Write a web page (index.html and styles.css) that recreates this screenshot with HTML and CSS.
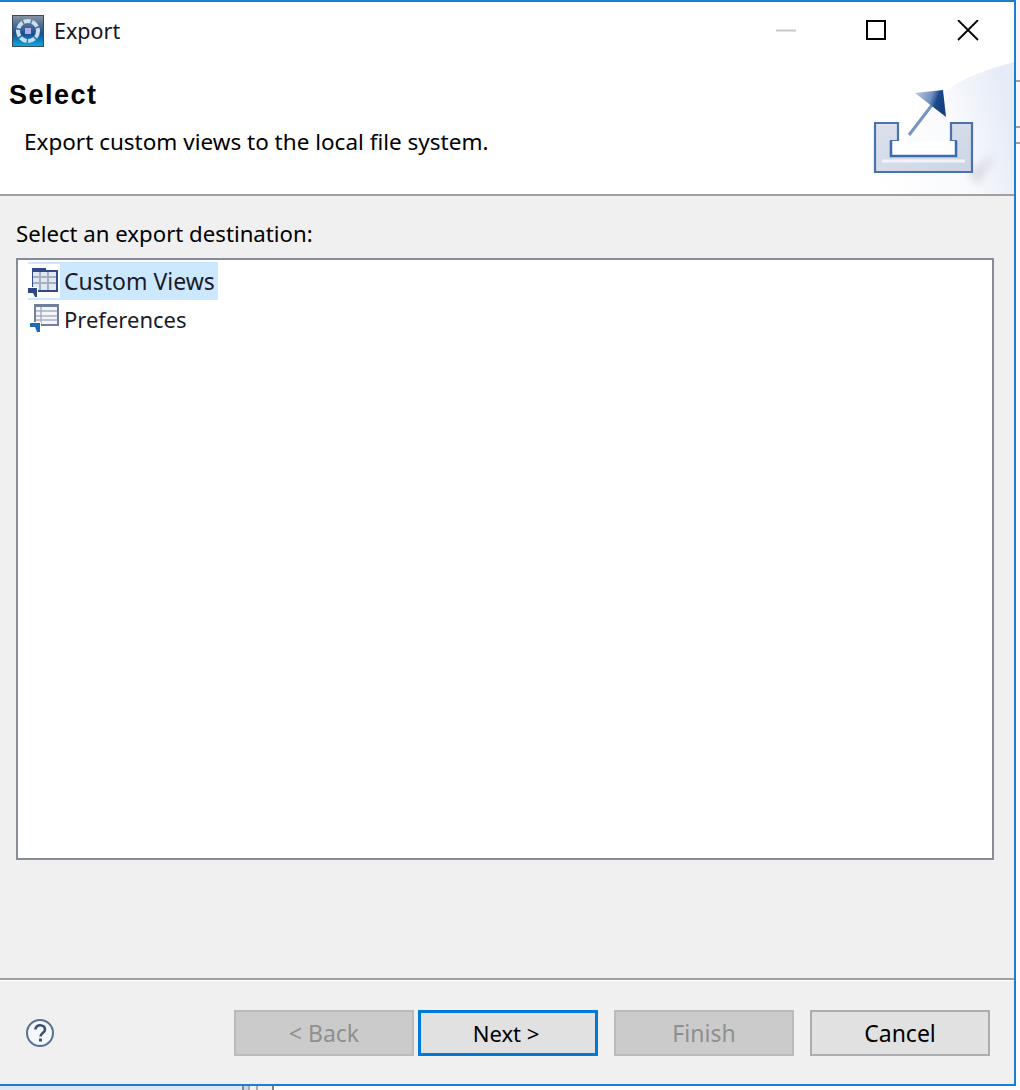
FILE: index.html
```html
<!DOCTYPE html>
<html lang="en">
<head>
    <meta charset="UTF-8">
    <meta name="viewport" content="width=device-width, initial-scale=1.0">
    <title>Export</title>
    <link rel="stylesheet" href="styles.css">
</head>
<body>
    <div class="dialog">
        <div class="banner">
            <svg class="banner-art" width="196" height="134" viewBox="0 0 196 134">
                <defs>
                    <linearGradient id="wash" x1="0" y1="0.7" x2="1" y2="0.5">
                        <stop offset="0" stop-color="#ffffff"/>
                        <stop offset="0.6" stop-color="#f9fafd"/>
                        <stop offset="1" stop-color="#e5ebf7"/>
                    </linearGradient>
                    <linearGradient id="tray" x1="0" y1="0" x2="1" y2="1">
                        <stop offset="0" stop-color="#dde1ec"/>
                        <stop offset="1" stop-color="#ccd5e6"/>
                    </linearGradient>
                    <linearGradient id="arrow" x1="0" y1="0" x2="1" y2="0.3">
                        <stop offset="0" stop-color="#c3d0e4"/>
                        <stop offset="0.55" stop-color="#6f90bf"/>
                        <stop offset="0.75" stop-color="#1d4a8c"/>
                        <stop offset="1" stop-color="#143f80"/>
                    </linearGradient>
                    <filter id="soft"><feGaussianBlur stdDeviation="4"/></filter>
                </defs>
                <path d="M196 2 C160 12 130 22 110 50 C90 80 70 110 50 134 H196 Z" fill="url(#wash)"/>
                <path d="M150 114 L178 92 L160 124 Z" fill="#cfcbd6" opacity="0.7" filter="url(#soft)"/>
                <path d="M57 63 H80 V81 H73 V96 H138 V81 H133 V63 H154 V112 H57 Z" fill="url(#tray)" stroke="#4a73ac" stroke-width="2.2"/>
                <path d="M64 101 H147" stroke="#f1f3f8" stroke-width="3"/>
                <path d="M73 81 V96 H138 V81" fill="#fff" stroke="#3c6cab" stroke-width="2.5"/>
                <path d="M91 75 L114 45" stroke="#7494c2" stroke-width="3"/>
                <path d="M97 33 L125 30 L128 57 Z" fill="url(#arrow)"/>
            </svg>
            <div class="titlebar">
                <svg class="app-icon" width="32" height="32" viewBox="0 0 32 32">
                    <defs>
                        <linearGradient id="appbg" x1="0" y1="0" x2="0" y2="1">
                            <stop offset="0" stop-color="#8d98a4"/>
                            <stop offset="0.3" stop-color="#4d6f95"/>
                            <stop offset="0.6" stop-color="#174f92"/>
                            <stop offset="1" stop-color="#06b4e6"/>
                        </linearGradient>
                    </defs>
                    <rect width="32" height="32" fill="url(#appbg)"/>
                    <rect x="0.5" y="0.5" width="31" height="31" fill="none" stroke="#3b4a57"/>
                    <circle cx="16" cy="16" r="10" fill="none" stroke="#cfdcef" stroke-width="4" stroke-dasharray="7 1.5"/>
                    <rect x="13" y="13" width="6" height="6" fill="#b3acec"/>
                </svg>
                <span class="title-text">Export</span>
                <div class="window-controls">
                    <svg width="22" height="22" viewBox="0 0 22 22"><path d="M1 10.5 H21" stroke="#c8c8c8" stroke-width="2"/></svg>
                    <svg width="22" height="22" viewBox="0 0 22 22"><rect x="1" y="1" width="18" height="18" fill="none" stroke="#000" stroke-width="2"/></svg>
                    <svg width="22" height="22" viewBox="0 0 22 22"><path d="M1 0 L21 20 M21 0 L1 20" stroke="#000" stroke-width="1.8"/></svg>
                </div>
            </div>
            <h1 class="page-title">Select</h1>
            <p class="page-desc">Export custom views to the local file system.</p>
        </div>

        <div class="content">
            <label class="list-label">Select an export destination:</label>
            <div class="tree">
                <div class="tree-item selected">
                    <svg class="tree-icon" width="32" height="34" viewBox="0 0 32 34">
                        <rect width="32" height="34" fill="#fff"/>
                        <path d="M4 4 H18 V6 H30 V28 H4 Z" fill="#2f4a86"/>
                        <rect x="5" y="8" width="23" height="18" fill="#dfe7f3"/>
                        <path d="M5 13 H28 M5 19 H28 M12 8 V26 M20 8 V26" stroke="#a7afbd" stroke-width="2"/>
                        <rect x="0" y="23" width="10" height="11" fill="#fff"/>
                        <path d="M0 24 H9 V33 H7 L5 29 H0 Z" fill="#2c4a80"/>
                    </svg>
                    <span>Custom Views</span>
                </div>
                <div class="tree-item">
                    <svg class="tree-icon" width="32" height="34" viewBox="0 0 32 34">
                        <rect x="6" y="2" width="25" height="22" fill="#6f7f9c"/>
                        <rect x="8" y="5" width="21" height="17" fill="#f3f5f9"/>
                        <path d="M8 9 H29 M8 14 H29 M8 18 H29 M13 5 V22" stroke="#a9b1bf" stroke-width="1.5"/>
                        <rect x="1" y="20" width="12" height="11" fill="#fff"/>
                        <path d="M2 21 H12 V30 H9 L7 25 H2 Z" fill="#1f6bb0"/>
                    </svg>
                    <span class="pref">Preferences</span>
                </div>
            </div>
        </div>

        <div class="footer">
            <svg class="help" width="30" height="30" viewBox="0 0 30 30">
                <circle cx="15" cy="15" r="13" fill="#f4f7fc" stroke="#5c6f96" stroke-width="2"/>
                <path d="M10.5 11.5 C10.5 5.5 20 6 20 11.5 C20 15 15.5 15 15.5 18.5" fill="none" stroke="#3f4f70" stroke-width="2.6"/>
                <rect x="14" y="20.5" width="3" height="3" fill="#3f4f70"/>
            </svg>
            <div class="buttons">
                <button class="btn" disabled>&lt; Back</button>
                <button class="btn default">Next &gt;</button>
                <button class="btn finish" disabled>Finish</button>
                <button class="btn cancel">Cancel</button>
            </div>
        </div>
    </div>
    <div class="behind-bottom"></div>
    <div class="behind-right"></div>
</body>
</html>
```

FILE: styles.css
```css
* {
    box-sizing: border-box;
}
html, body {
    margin: 0;
    padding: 0;
}
body {
    position: relative;
    width: 1020px;
    height: 1090px;
    overflow: hidden;
    background-color: #fdfdfe;
    font-family: "Noto Sans", "Open Sans", sans-serif;
    font-size: 22.5px;
    color: #000;
}
.dialog {
    width: 1016px;
    height: 1086px;
    display: flex;
    flex-direction: column;
    background-color: #f0f0f0;
    border-top: 2px solid #1c7ed2;
    border-right: 2px solid #1c7ed2;
    border-bottom: 2px solid #1c7ed2;
}
/* bits of the window behind the dialog */
.behind-bottom {
    position: absolute;
    left: 0;
    bottom: 0;
    width: 274px;
    height: 4px;
    background: linear-gradient(to right,
        #dce8f5 0 242px, #808890 242px 244px, #c9d8ea 244px 248px,
        #aaaaaa 248px 250px, #f0f0f0 250px 256px, #aaaaaa 256px 258px,
        #f0f0f0 258px 272px, #808080 272px 274px);
}
.behind-right {
    position: absolute;
    right: 0;
    top: 0;
    width: 4px;
    height: 145px;
    background: linear-gradient(to bottom,
        #f7f7f7 0 80px, #a0a0a0 80px 82px, #f7f7f7 82px 126px,
        #a0a0a0 126px 128px, #f7f7f7 128px 142px, #a0a0a0 142px 144px, #fdfdfe 144px);
}
.banner {
    position: relative;
    height: 194px;
    padding: 0 0 0 9px;
    background-color: #fff;
    border-bottom: 2px solid #a0a0a0;
}
.banner-art {
    position: absolute;
    right: 0;
    bottom: 0;
}
.titlebar {
    position: relative;
    display: flex;
    align-items: center;
    height: 58px;
    padding: 0 8px 0 3px;
}
.app-icon {
    margin-right: 10px;
}
.title-text {
    font-size: 21.5px;
    padding-bottom: 2px;
    color: #14141e;
}
.window-controls {
    margin-left: auto;
    display: flex;
    gap: 69px;
    align-items: center;
    margin-right: 27px;
}
.page-title {
    position: relative;
    margin: 14px 0 0 0;
    font-family: "Liberation Sans", Arial, sans-serif;
    font-size: 27px;
    line-height: 42px;
    font-weight: bold;
    letter-spacing: 1.5px;
}
.page-desc {
    position: relative;
    margin: 8px 0 0 15px;
    line-height: 36px;
}
.content {
    flex: 1;
    padding: 19px 20px 0 16px;
}
.list-label {
    display: block;
    font-size: 22.2px;
    line-height: 38px;
    margin-bottom: 5px;
}
.tree {
    height: 602px;
    padding: 2px 10px;
    background-color: #fff;
    border: 2px solid #878c96;
}
.tree-item {
    display: flex;
    align-items: center;
    width: 190px;
    height: 38px;
    font-size: 23px;
}
.tree-item.selected {
    background-color: #cce8ff;
}
.tree-icon {
    flex: none;
    margin-right: 4px;
}
.tree-item span {
    white-space: nowrap;
    color: #1a1a2a;
}
.tree-item .pref {
    font-size: 22px;
    padding-bottom: 1px;
}
.footer {
    height: 106px;
    display: flex;
    align-items: flex-start;
    justify-content: space-between;
    padding: 30px 24px 0 25px;
    border-top: 2px solid #a0a0a0;
    box-shadow: inset 0 1px 0 #fff;
}
.help {
    margin-top: 8px;
}
.buttons {
    display: flex;
}
.btn {
    width: 180px;
    height: 46px;
    margin-left: 4px;
    padding: 0;
    font-family: inherit;
    font-size: 23px;
    color: #000;
    background-color: #e1e1e1;
    border: 2px solid #adadad;
}
.btn:disabled {
    color: #8f8f8f;
    background-color: #cbcbcb;
    border-color: #bbbbbb;
}
.btn.default {
    font-size: 22px;
    padding-right: 4px;
    border: 3px solid #0078d7;
}
.btn.finish, .btn.cancel {
    margin-left: 16px;
}
```
